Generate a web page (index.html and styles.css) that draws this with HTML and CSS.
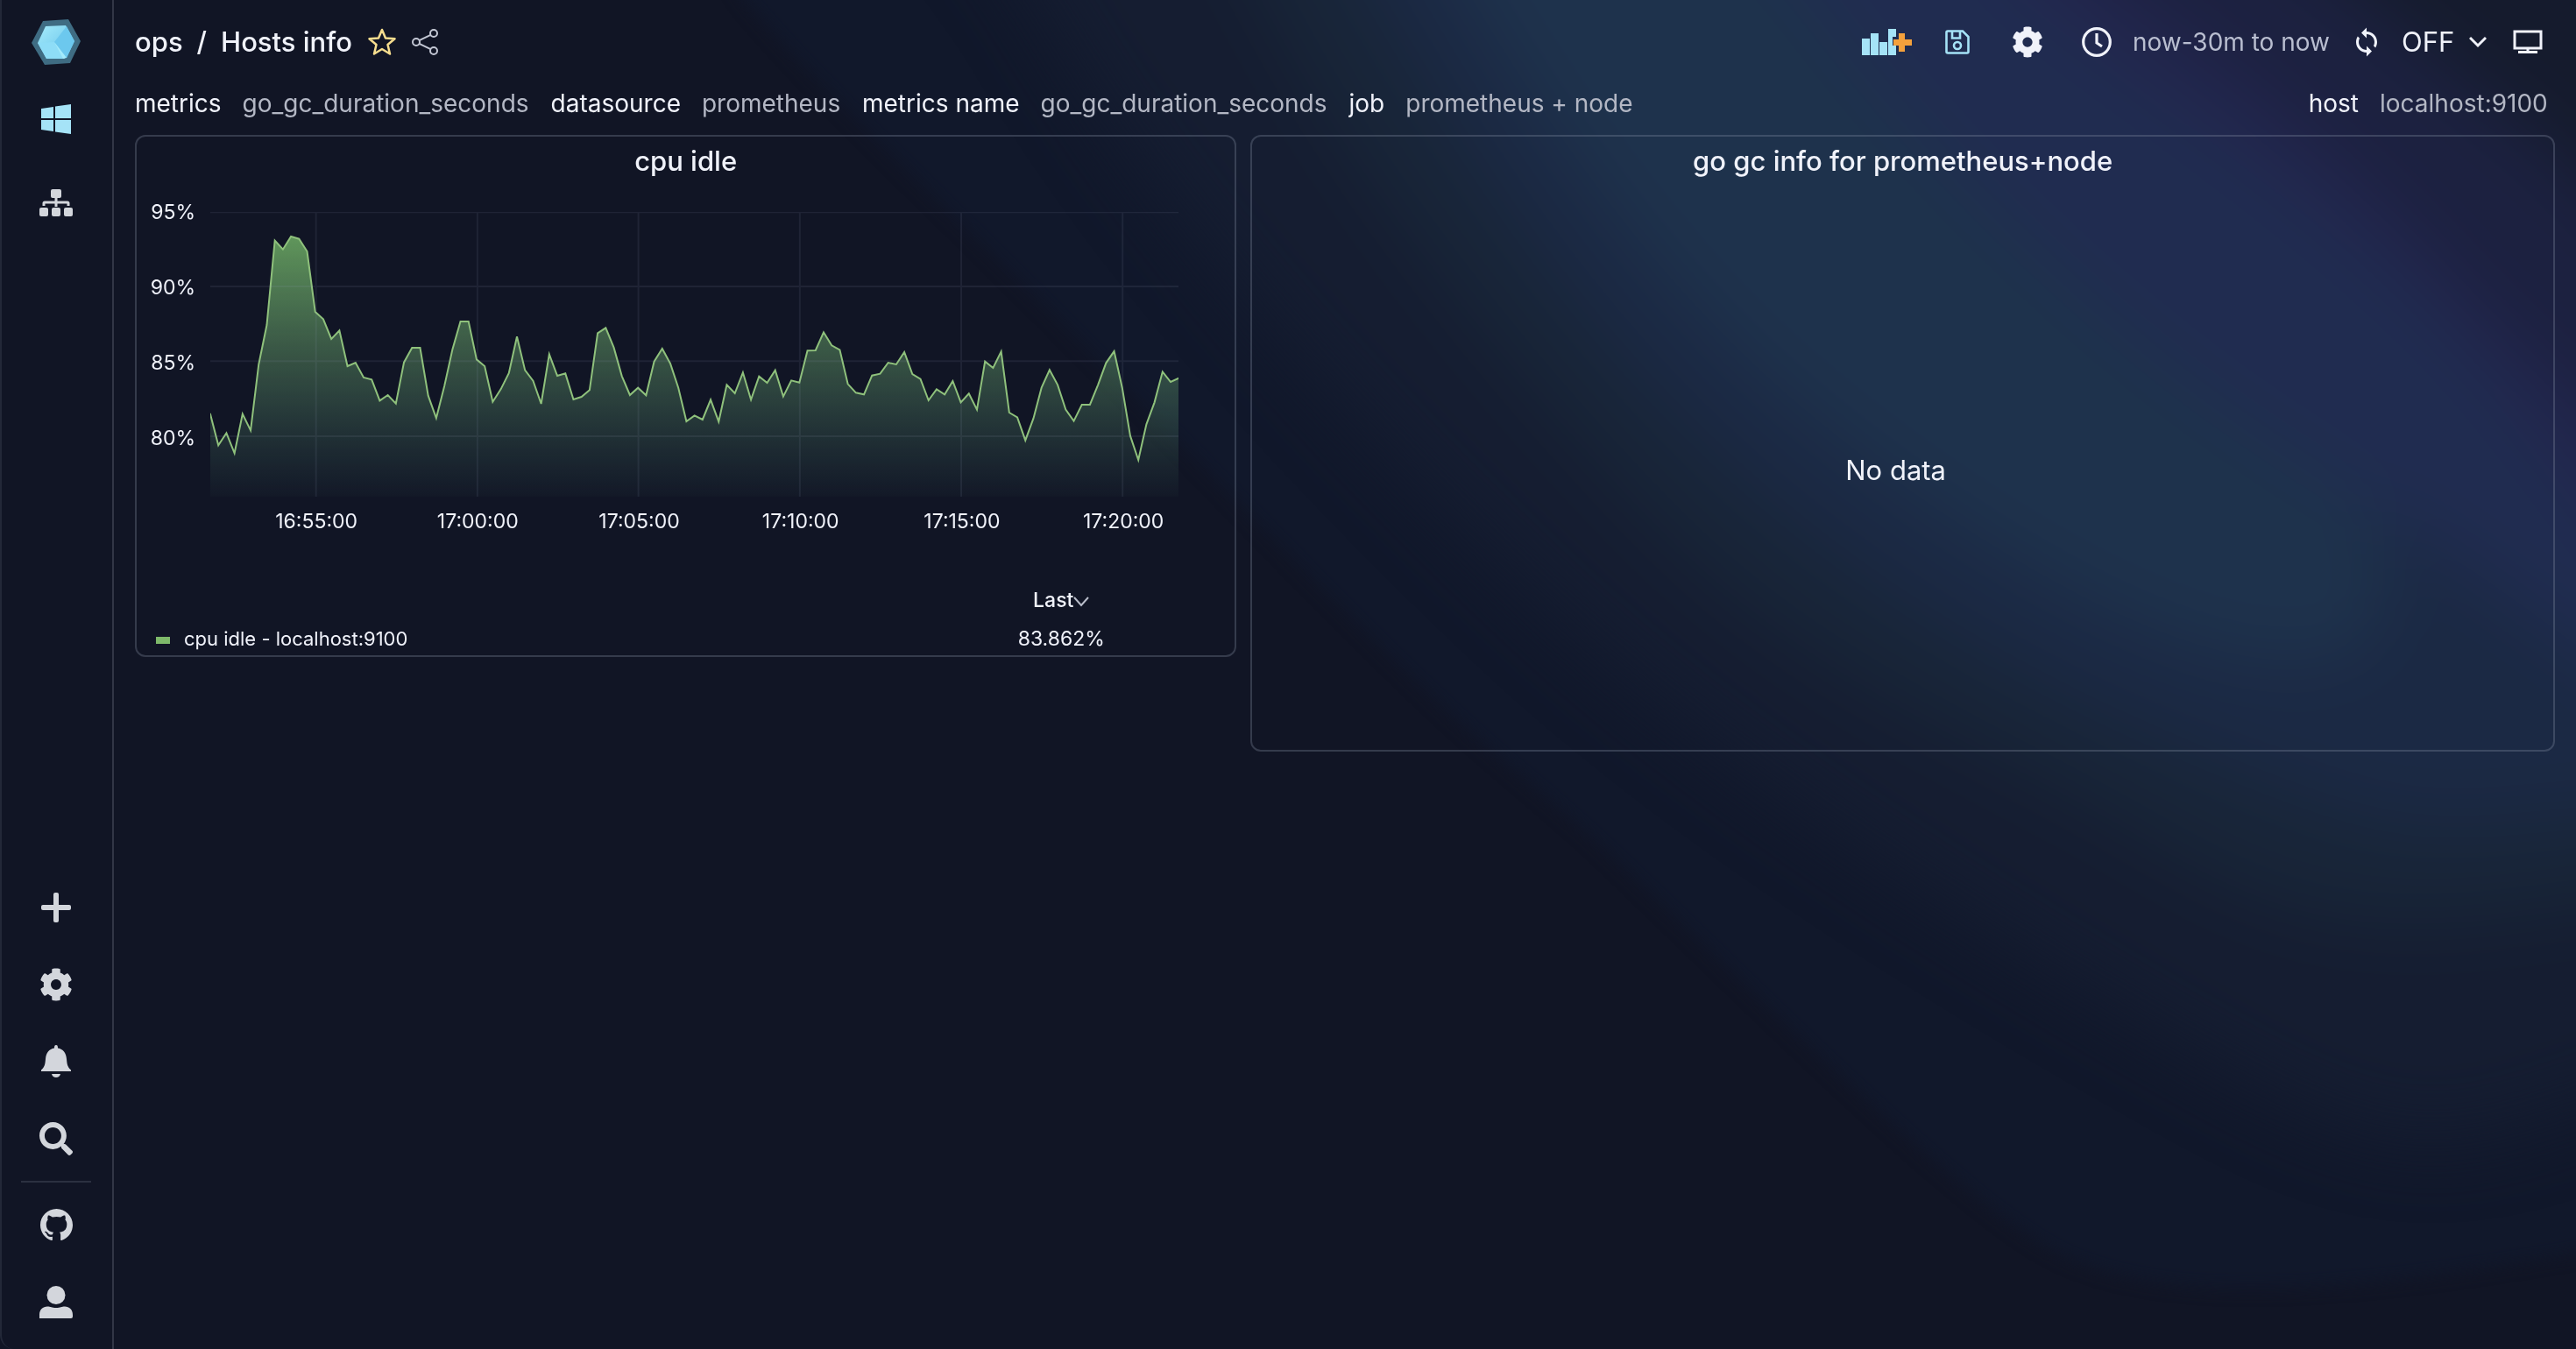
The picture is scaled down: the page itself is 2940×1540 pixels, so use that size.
FILE: index.html
```html
<!DOCTYPE html>
<html lang="en">
<head>
<meta charset="utf-8">
<title>Hosts info</title>
<link rel="stylesheet" href="styles.css">
</head>
<body>
<svg class="backdrop" viewBox="0 0 2940 1540" preserveAspectRatio="none" aria-hidden="true">
  <defs><filter id="soft" color-interpolation-filters="sRGB" filterUnits="userSpaceOnUse" x="-200" y="-300" width="3500" height="2100"><feGaussianBlur stdDeviation="40"/></filter>
  <filter id="edge" color-interpolation-filters="sRGB" filterUnits="userSpaceOnUse" x="-200" y="-300" width="3500" height="2100"><feGaussianBlur stdDeviation="9"/></filter></defs>
  <path filter="url(#edge)" fill="#11182b" d="M760-140 850 0C950 120 1100 250 1400 560S1700 850 1810 950S2200 1340 2330 1420S2700 1480 3100 1400V-140Z"/>
  <g filter="url(#soft)">
    <path fill="#151d31" d="M1080-140 1180 0C1320 250 1560 500 1750 680S2200 1030 2500 1200S2800 1300 3140 1200V-140Z"/>
    <path fill="#182538" d="M1360-140 1440 0C1540 200 1700 400 1880 590S2250 840 2450 960S2740 1080 3140 1000V-140Z"/>
    <path fill="#1b2944" d="M1490-140 1570 0C1700 220 1800 370 1960 520S2300 780 2550 880S2760 940 3140 920V-140Z"/>
    <path fill="#1e324c" d="M1600-140 1680 0C1800 200 1920 350 2050 460S2400 720 2560 750S2750 700 2700 560L2100-140Z"/>
    <path fill="#202c50" d="M1950-140 2070 0C2200 180 2400 370 2560 480S2800 620 3100 860V-140Z"/>
    <path fill="#22254d" d="M2200-140 2330 0C2460 100 2610 200 2740 320S2880 480 3100 760V-140Z"/>
    <path fill="#1c2140" d="M2280-140 2440 0C2560 80 2720 220 2820 340L3140 640V-140Z"/>
    <path fill="#151b2d" d="M2520-140 2700 0L2900 160L3140 400V-140Z"/>
  </g>
</svg>
<svg class="sprite" aria-hidden="true">
  <symbol id="gear" viewBox="0 0 512 512"><path d="M487.4 315.7l-42.6-24.6c4.3-23.2 4.3-47 0-70.2l42.6-24.6c4.9-2.8 7.1-8.6 5.5-14-11.1-35.6-30-67.8-54.7-94.6-3.8-4.1-10-5.1-14.8-2.3L380.8 110c-17.9-15.4-38.5-27.3-60.8-35.1V25.8c0-5.6-3.9-10.5-9.4-11.7-36.7-8.2-74.3-7.8-109.2 0-5.5 1.2-9.4 6.1-9.4 11.7V75c-22.2 7.9-42.8 19.8-60.8 35.1L88.7 85.5c-4.9-2.8-11-1.9-14.8 2.3-24.7 26.7-43.6 58.9-54.7 94.6-1.7 5.4.6 11.2 5.5 14L67.3 221c-4.3 23.2-4.3 47 0 70.2l-42.6 24.6c-4.9 2.8-7.1 8.6-5.5 14 11.1 35.6 30 67.8 54.7 94.6 3.8 4.1 10 5.1 14.8 2.3l42.6-24.6c17.9 15.4 38.5 27.3 60.8 35.1v49.2c0 5.6 3.9 10.5 9.4 11.7 36.7 8.2 74.3 7.8 109.2 0 5.5-1.2 9.4-6.1 9.4-11.7v-49.2c22.2-7.9 42.8-19.8 60.8-35.1l42.6 24.6c4.9 2.8 11 1.9 14.8-2.3 24.7-26.7 43.6-58.9 54.7-94.6 1.5-5.5-.7-11.3-5.6-14.1zM256 336c-44.1 0-80-35.9-80-80s35.9-80 80-80 80 35.9 80 80-35.9 80-80 80z"/></symbol>
</svg>
<div class="app">
  <nav class="sidebar" aria-label="Main">
    <a class="nav-item" href="#home" aria-label="Home">
      <svg width="56" height="52" viewBox="0 0 56 52">
        <defs><linearGradient id="gem" x1="0" y1="0" x2="1" y2="1"><stop offset="0" stop-color="#a5ebfb"/><stop offset="1" stop-color="#62c0e8"/></linearGradient></defs>
        <path fill="#3f6c83" d="M13 2 42 0 56 25 44 50 15 52 0 27Z"/>
        <path fill="url(#gem)" d="M16 8 39 7 49 25 40 44 17 45 7 27Z"/>
        <path fill="#8eddf7" d="M7 27 26 26 38 45 17 45Z"/>
        <path fill="#6cc8ee" d="M26 26 40 8 49 25 40 44Z"/>
        <path fill="#a5ebfb" d="M26 26 40 44 36 45Z"/>
      </svg>
    </a>
    <a class="nav-item" href="#dashboard" aria-label="Dashboard"><svg class="accent" width="34" height="34" viewBox="0 0 34 34"><path d="M0 5 14 3V16H0ZM16 2.600 34 0V16H16ZM0 18H14V31L0 29ZM16 18H34V34L16 31.400Z"/></svg></a>
    <a class="nav-item spaced" href="#topology" aria-label="Topology"><svg width="38" height="32" viewBox="0 0 38 32"><rect x="13" width="12" height="10" rx="2"/><rect y="21" width="10" height="10" rx="2"/><rect x="14" y="21" width="10" height="10" rx="2"/><rect x="28" y="21" width="10" height="10" rx="2"/><path fill="none" stroke="currentColor" stroke-width="3" d="M19 9V20M5 19V16Q5 15 6 15H32Q33 15 33 16V19"/></svg></a>
    <div class="nav-bottom">
      <a class="nav-item" href="#new" aria-label="New"><svg width="34" height="34" viewBox="0 0 34 34"><rect y="14" width="34" height="6" rx="2"/><rect x="14" width="6" height="34" rx="2"/></svg></a>
      <a class="nav-item" href="#config" aria-label="Configuration"><svg width="38" height="38"><use href="#gear"/></svg></a>
      <a class="nav-item" href="#alerts" aria-label="Alerts"><svg width="34" height="38" viewBox="0 0 34 38"><path d="M17 0C18.500 0 19 1 19 3.500 25 4.500 28.500 9 29 16 29.500 22 30 25 34 28.500V30H0V28.500C4 25 4.500 22 5 16 5.500 9 9 4.500 15 3.500 15 1 15.500 0 17 0ZM12 33H22Q21 37 17 37T12 33Z"/></svg></a>
      <a class="nav-item" href="#search" aria-label="Search"><svg width="38" height="38" viewBox="0 0 512 512"><path d="M505 442.700L405.300 343c-4.500-4.500-10.600-7-17-7H372c27.600-35.300 44-79.700 44-128C416 93.100 322.900 0 208 0S0 93.100 0 208s93.100 208 208 208c48.300 0 92.700-16.400 128-44v16.300c0 6.400 2.500 12.500 7 17l99.700 99.700c9.400 9.400 24.600 9.400 33.900 0l28.300-28.300c9.400-9.400 9.400-24.600.1-34zM208 336c-70.700 0-128-57.200-128-128 0-70.700 57.200-128 128-128 70.700 0 128 57.200 128 128 0 70.700-57.200 128-128 128z"/></svg></a>
      <hr class="nav-rule">
      <a class="nav-item" href="#github" aria-label="GitHub"><svg width="37" height="37" viewBox="0 0 16 16"><path d="M8 0C3.580 0 0 3.580 0 8c0 3.540 2.290 6.530 5.470 7.590.4.070.55-.17.55-.38 0-.19-.01-.82-.01-1.490-2.010.37-2.530-.49-2.690-.94-.09-.23-.48-.94-.82-1.130-.28-.15-.68-.52-.01-.53.63-.01 1.080.58 1.230.82.72 1.210 1.870.87 2.330.66.070-.52.280-.87.510-1.070-1.780-.2-3.640-.89-3.640-3.950 0-.87.310-1.590.82-2.150-.08-.2-.36-1.020.08-2.120 0 0 .67-.21 2.200.82.640-.18 1.320-.27 2-.27.680 0 1.360.090 2 .27 1.530-1.040 2.200-.82 2.200-.82.440 1.100.160 1.920.080 2.120.510.560.820 1.270.820 2.150 0 3.070-1.870 3.750-3.650 3.950.290.250.540.730.540 1.480 0 1.070-.01 1.930-.01 2.200 0 .210.150.460.550.380A8.013 8.013 0 0 0 16 8c0-4.420-3.580-8-8-8z"/></svg></a>
      <a class="nav-item" href="#profile" aria-label="Profile"><svg width="38" height="37" viewBox="0 0 38 37"><circle cx="19" cy="10.500" r="10.500"/><path d="M0 37V33C0 27 4 23.500 9 23.500 13 23.500 14 25 19 25S25 23.500 29 23.500C34 23.500 38 27 38 33V35Q38 37 36 37Z"/></svg></a>
    </div>
  </nav>

  <main class="page">
    <header class="toolbar">
      <h1 class="crumbs"><a href="#ops">ops</a><span>/</span><a href="#hosts">Hosts info</a></h1>
      <button class="icon-btn star" aria-label="Favourite"><svg width="32" height="32" viewBox="0 0 32 32"><path fill="none" stroke="currentColor" stroke-width="2.500" stroke-linejoin="round" d="M16 2 20 11.500 30.500 12.300 22.500 19 25 29.500 16 24 7 29.500 9.500 19 1.500 12.300 12 11.500Z"/></svg></button>
      <button class="icon-btn share" aria-label="Share"><svg width="30" height="30" viewBox="0 0 30 30"><g fill="none" stroke="currentColor" stroke-width="2"><circle cx="5" cy="15" r="4"/><circle cx="25" cy="5" r="4"/><circle cx="25" cy="25" r="4"/><path d="M8.500 13.200 21.500 6.800M8.500 16.800 21.500 23.200"/></g></svg></button>
      <div class="tools">
        <button class="icon-btn add" aria-label="Add panel"><svg width="58" height="32" viewBox="0 0 58 32"><path class="accent" d="M0 12H9V31H0ZM10 6H19V31H10ZM20 16H29V31H20ZM30 1H39V10H35V20H39V31H30Z"/><path fill="#f4a13c" d="M42 6H49V13H57V20H49V27H42V20H36V13H42Z"/></svg></button>
        <button class="icon-btn save" aria-label="Save"><svg width="28" height="28" viewBox="0 0 28 28"><g fill="none" stroke="#a5e3f7" stroke-width="2.600"><path d="M3 1.500H20L26.500 8V25Q26.500 26.500 25 26.500H3Q1.500 26.500 1.500 25V3Q1.500 1.500 3 1.500Z"/><path d="M8 2V9.500H17V2"/><circle cx="14" cy="18" r="4"/></g></svg></button>
        <button class="icon-btn settings" aria-label="Settings"><svg width="36" height="36"><use href="#gear"/></svg></button>
        <button class="range"><svg width="34" height="34" viewBox="0 0 34 34"><circle cx="17" cy="17" r="15.300" fill="none" stroke="#f0f2fa" stroke-width="3.200"/><path d="M17 7V18L23 22" fill="none" stroke="#f0f2fa" stroke-width="3.200"/></svg><span>now-30m to now</span></button>
        <button class="icon-btn" aria-label="Refresh"><svg width="36" height="36" viewBox="0 0 24 24"><path d="M12 4V1L8 5l4 4V6c3.310 0 6 2.690 6 6 0 1.010-.25 1.970-.7 2.800l1.460 1.460C19.540 15.030 20 13.570 20 12c0-4.420-3.580-8-8-8zm0 14c-3.310 0-6-2.690-6-6 0-1.010.25-1.970.7-2.800L5.240 7.740C4.460 8.970 4 10.430 4 12c0 4.420 3.580 8 8 8v3l4-4-4-4v3z"/></svg></button>
        <label class="interval"><select aria-label="Refresh interval"><option>OFF</option></select><svg width="20" height="14" viewBox="0 0 20 14"><path fill="none" stroke="currentColor" stroke-width="3" d="M1 2 10 11 19 2"/></svg></label>
        <button class="icon-btn screen" aria-label="Kiosk mode"><svg width="34" height="28" viewBox="0 0 34 28"><path fill="none" stroke="currentColor" stroke-width="3" d="M2 2H32V21H2ZM17 21V25M6 25.500H28"/></svg></button>
      </div>
    </header>

    <form class="variables">
      <label for="v1">metrics</label><select id="v1"><option>go_gc_duration_seconds</option></select>
      <label for="v2">datasource</label><select id="v2"><option>prometheus</option></select>
      <label for="v3">metrics name</label><select id="v3"><option>go_gc_duration_seconds</option></select>
      <label for="v4">job</label><select id="v4"><option>prometheus + node</option></select>
      <label class="push" for="v5">host</label><select id="v5"><option>localhost:9100</option></select>
    </form>

    <div class="panels">
      <section class="panel cpu">
        <h2>cpu idle</h2>
        <div class="chart">
          <div class="y-axis"><span>95%</span><span>90%</span><span>85%</span><span>80%</span></div>
          <div class="plot-col">
            <svg class="plot" viewBox="0 278 120 975" preserveAspectRatio="none" role="img" aria-label="cpu idle over time">
              <defs><linearGradient id="area" gradientUnits="userSpaceOnUse" x1="0" y1="362" x2="0" y2="1253"><stop offset="0" stop-color="#7cc46e" stop-opacity=".74"/><stop offset=".5" stop-color="#6fae72" stop-opacity=".38"/><stop offset="1" stop-color="#5a9a80" stop-opacity=".03"/></linearGradient></defs>
              <path class="series" fill="url(#area)" d="M-1 1300V970H0L1 1077 2 1035 3 1104 4 970 5 1026 6 800 7 665 8 376 9 406 10 362 11 370 12 413 13 620 14 645 15 713 16 684 17 806 18 794 19 845 20 852 21 924 22 905 23 934 24 793 25 743 26 743 27 907 28 984 29 875 30 750 31 653 32 653 33 783 34 806 35 928 36 885 37 830 38 705 39 820 40 856 41 935 42 765 43 839 44 831 45 920 46 911 47 888 48 693 49 675 50 742 51 840 52 905 53 880 54 906 55 790 56 746 57 797 58 880 59 995 60 975 61 989 62 921 63 996 64 870 65 899 66 828 67 921 68 841 69 863 70 820 71 910 72 855 73 862 74 753 75 752 76 690 77 735 78 750 79 867 80 897 81 903 82 838 83 832 84 794 85 800 86 758 87 833 88 850 89 923 90 885 91 903 92 857 93 930 94 900 95 955 96 790 97 812 98 756 99 965 100 981 101 1060 102 985 103 880 104 819 105 870 106 955 107 994 108 938 109 938 110 870 111 795 112 755 113 880 114 1045 115 1127 116 1005 117 930 118 825 119 860 120 847H121V1300Z"/>
              <path class="gridlines" d="M0 279H120M0 533H120M0 789H120M0 1046H120M13.100 279V1253M33.100 279V1253M53.050 279V1253M73.050 279V1253M93.050 279V1253M113.050 279V1253"/>
            </svg>
            <div class="x-axis"><span>16:55:00</span><span>17:00:00</span><span>17:05:00</span><span>17:10:00</span><span>17:15:00</span><span>17:20:00</span></div>
          </div>
        </div>
        <table class="legend">
          <thead><tr><th></th><th>Last<svg width="18" height="13" viewBox="0 0 18 13"><path fill="none" stroke="#b9bdca" stroke-width="2" d="M1 2 9 11 17 2"/></svg></th></tr></thead>
          <tbody><tr><td><i class="swatch"></i>cpu idle - localhost:9100</td><td>83.862%</td></tr></tbody>
        </table>
      </section>
      <section class="panel gc">
        <h2>go gc info for prometheus+node</h2>
        <p class="empty">No data</p>
      </section>
    </div>
  </main>
</div>
</body>
</html>
```
FILE: styles.css
```css
* { box-sizing: border-box; }

body {
  margin: 0;
  background: #111525;
  color: #f0f2fa;
  font: 28px/40px Inter, "Liberation Sans", sans-serif;
}

a { color: inherit; text-decoration: none; }
svg { display: block; fill: currentColor; flex: none; }

button, select {
  margin: 0;
  padding: 0;
  border: 0;
  background: none;
  color: inherit;
  font: inherit;
  appearance: none;
}

.sprite { position: absolute; width: 0; height: 0; }
.backdrop { position: fixed; inset: 0; width: 100%; height: 100%; z-index: -1; }
.accent { fill: #a5e3f7; }

.app { display: flex; min-height: 100vh; }

.sidebar {
  display: flex;
  flex-direction: column;
  width: 130px;
  padding: 4px 2px 10px 0;
  border: solid #323646;
  border-width: 0 2px;
  border-left-color: #232838;
  border-bottom-left-radius: 16px;
  color: #d3d6dc;
}

.nav-item { display: flex; align-items: center; justify-content: center; height: 88px; }
.nav-item.spaced { margin-top: 8px; }
.nav-bottom { margin-top: auto; }
.nav-rule { width: 80px; height: 2px; margin: 4px auto; border: 0; background: #2b3040; }

.page { flex: 1; min-width: 0; padding: 0 24px; }

.toolbar { display: flex; align-items: center; height: 96px; }
.crumbs { display: flex; gap: 16px; margin: 0; font-size: 31px; font-weight: 500; }
.star { margin-left: 18px; color: #f6dd8e; }
.share { margin-left: 18px; color: #c3c7d4; }

.tools { display: flex; align-items: center; margin-left: auto; padding-right: 14px; }
.save { margin-left: 37px; }
.settings { margin-left: 48px; }
.range { display: flex; align-items: center; gap: 24px; margin: 0 24px 0 44px; color: #b9bed0; }
.interval { display: flex; align-items: center; gap: 16px; margin: 0 30px 0 22px; font-size: 31px; }

.variables { display: flex; gap: 24px; align-items: center; height: 44px; padding-right: 8px; }
.variables select { color: #b3b7c4; }
.variables .push { margin-left: auto; }

.panels {
  display: grid;
  grid-template-columns: repeat(24, 1fr);
  gap: 16px;
  align-items: start;
  padding-top: 14px;
}

.panel { display: flex; flex-direction: column; border: 2px solid #8c96aa4d; border-radius: 12px; }
.panel h2 { margin: 0; padding-top: 8px; font-size: 31px; font-weight: 500; text-align: center; }
.cpu { grid-column: span 11; min-height: 596px; }
.gc { grid-column: span 13; min-height: 704px; }
.empty { margin: auto; padding: 14px 16px 0 0; font-size: 31px; }

.chart { display: flex; padding-right: 64px; font-size: 23px; }
.y-axis { display: flex; flex-direction: column; gap: 46px; width: 84px; padding: 18px 17px 0 0; text-align: right; }
.plot-col { flex: 1; min-width: 0; padding-top: 38px; }
.plot { width: 100%; height: 325px; }
.series { stroke: #8fc17c; stroke-width: 2px; vector-effect: non-scaling-stroke; }
.gridlines { fill: none; stroke: #a0aac81a; stroke-width: 2px; vector-effect: non-scaling-stroke; }
.x-axis { display: flex; margin: 8px -29px 0 29px; }
.x-axis span { flex: 1; text-align: center; }

.legend { width: 100%; margin-top: 44px; border-collapse: collapse; font-size: 22px; }
.legend th, .legend td { padding: 0; }
.legend th { height: 52px; font-weight: 500; }
.legend td { height: 36px; line-height: 36px; }
.legend th:last-child, .legend td:last-child { width: 396px; font-size: 23px; text-align: center; }
.legend th svg { display: inline-block; }
.legend td:first-child { padding-left: 22px; }
.swatch { display: inline-block; width: 16px; height: 8px; margin-right: 16px; background: #7eb96a; vertical-align: middle; }
```
